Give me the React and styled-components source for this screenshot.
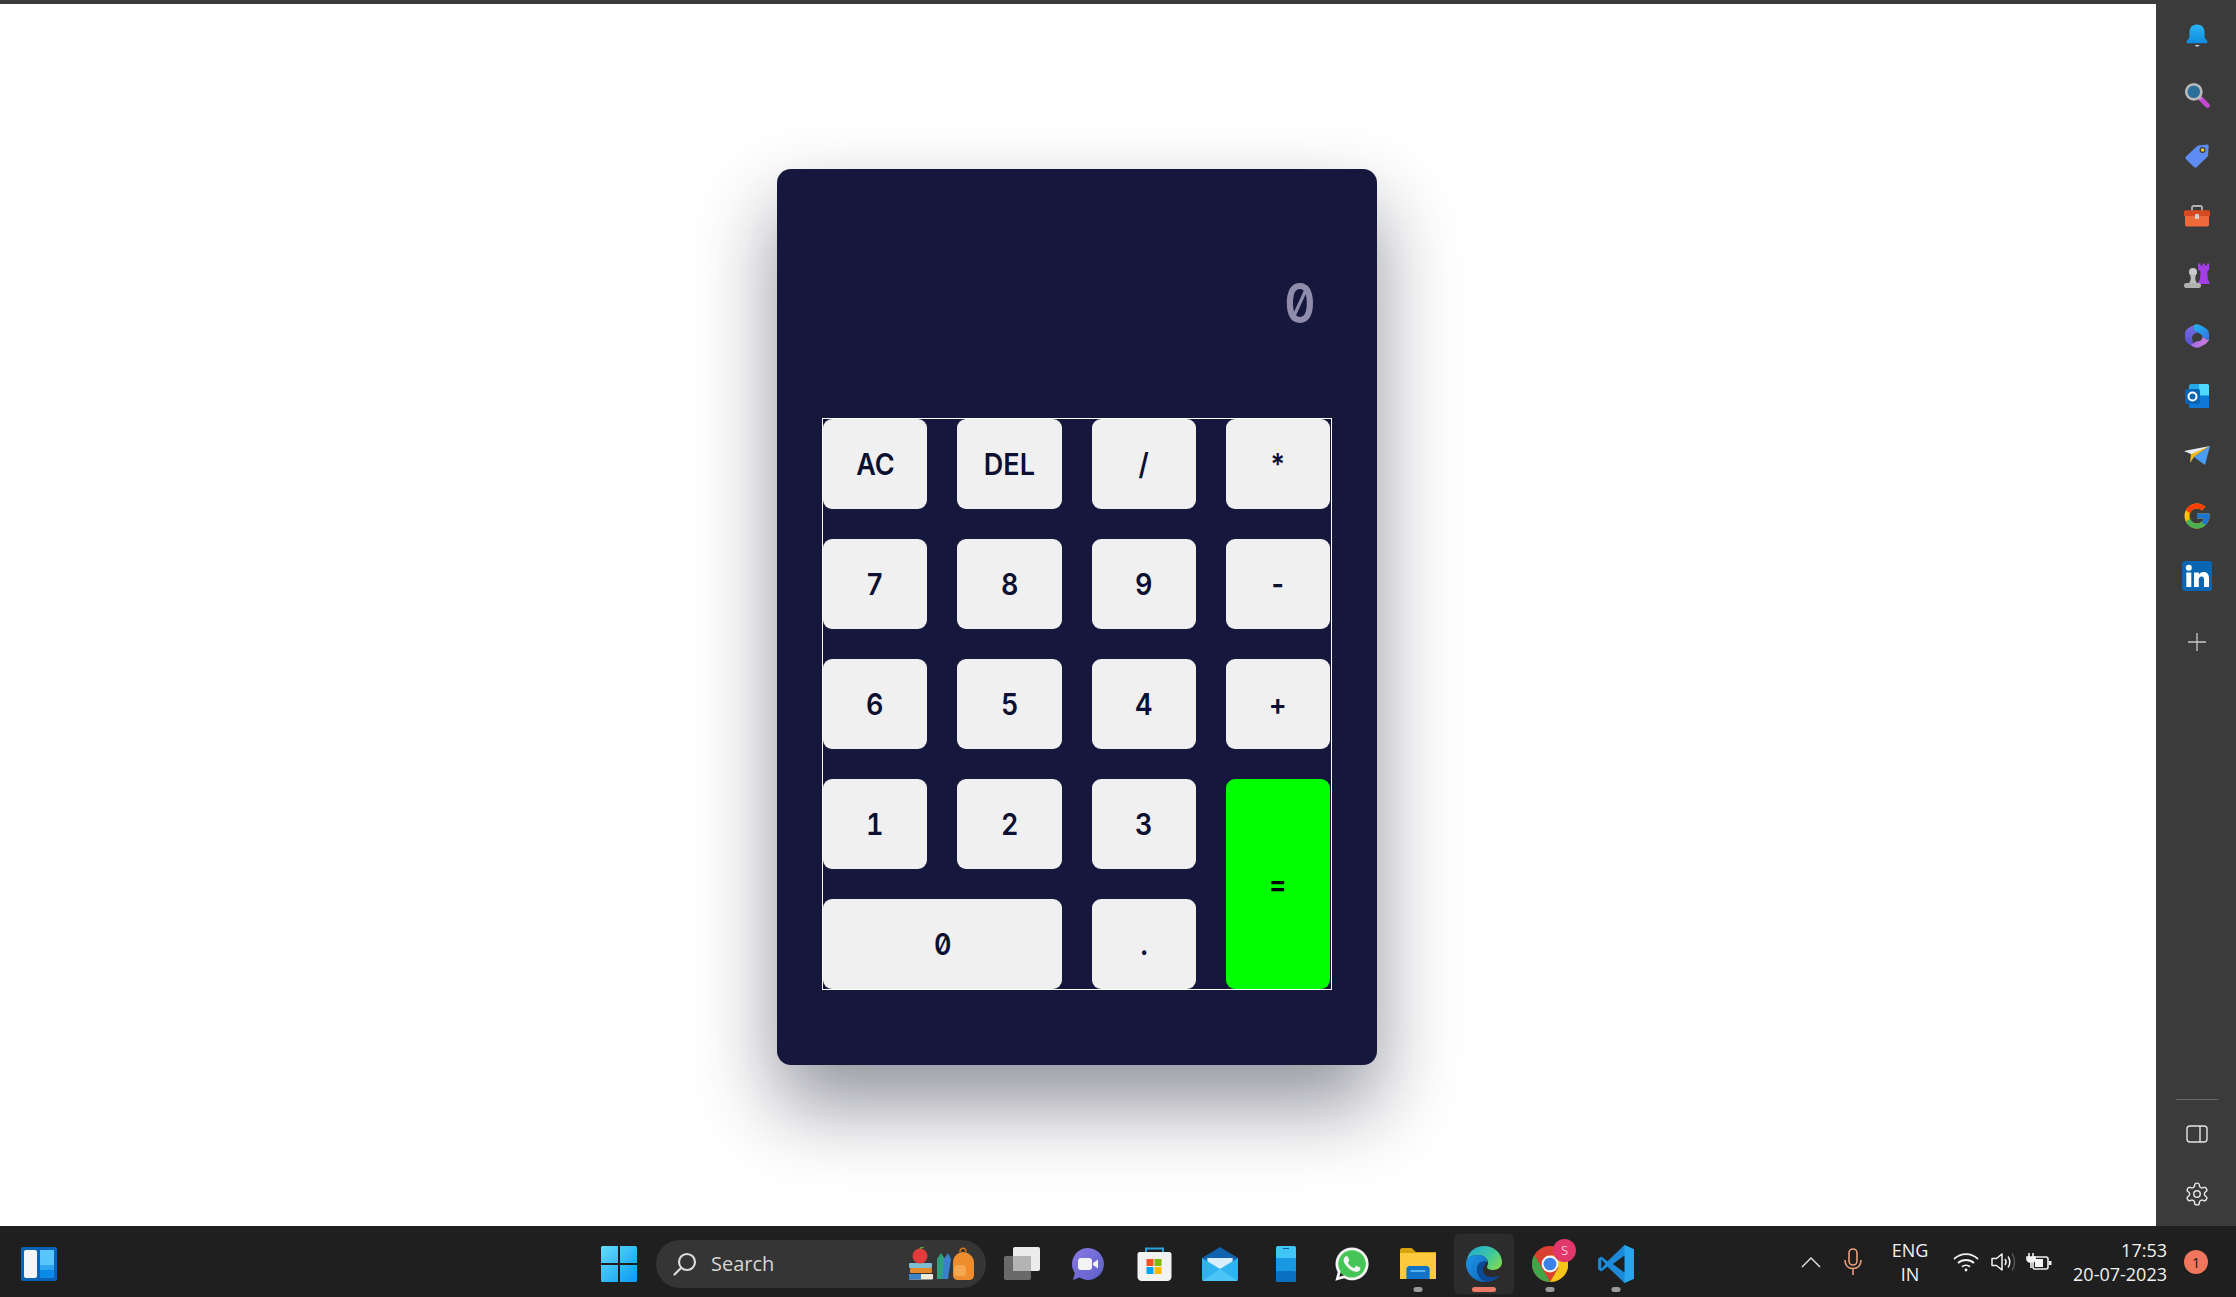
import React from 'react';
import styled, { createGlobalStyle } from 'styled-components';
import { FcGoogle } from 'react-icons/fc';

const Global = createGlobalStyle`
  html, body { margin: 0; padding: 0; width: 100%; height: 100%; overflow: hidden; background: #fff; }
  #root { height: 100%; }
  * { box-sizing: border-box; }
`;

const Screen = styled.div`
  width: 2236px; height: 1297px; display: flex; flex-direction: column; background: #fff;
  font-family: "Open Sans", "Noto Sans", sans-serif;
`;
const TopStrip = styled.div`height: 4px; background: #3b3b3b; flex: none; margin-right: 80px;`;
const Workspace = styled.div`flex: 1; display: flex; min-height: 0;`;
const Content = styled.main`flex: 1; display: flex; align-items: center; justify-content: center; padding: 4px 2px 0 0;`;
const Sidebar = styled.aside`
  width: 80px; margin-top: -4px; background: #3b3b3b; display: flex; flex-direction: column; align-items: center;
  padding: 6px 0 2px 2px; flex: none;
`;
const SideSlot = styled.div`
  height: 60px; display: flex; align-items: center; justify-content: center; flex: none;
  margin-top: ${p => p.$mt || 0}px;
`;
const SideDivider = styled.div`width: 42px; height: 1px; background: #6b6b6b; margin-top: auto; margin-bottom: 4px;`;

const Calculator = styled.section`
  width: 600px; height: 896px; background: #15183c; border-radius: 14px; padding: 0 45px 75px;
  box-shadow: 0 40px 80px rgba(16, 18, 40, 0.46);
  display: flex; flex-direction: column;
`;
const Display = styled.div`
  height: 249px; flex: none; display: flex; align-items: center; justify-content: flex-end; padding: 18px 16px 0 0;
  font-family: Inter, "DejaVu Sans Mono", monospace; font-size: 55px; font-weight: 600; color: #8f8dab;
  font-feature-settings: "zero", "tnum";
`;
const DisplayValue = styled.span`display: inline-block; transform: scaleX(0.88); transform-origin: right center;`;
const Keypad = styled.div`
  border: 1px solid #fff; display: grid; grid-template-columns: repeat(4, 104.3px); grid-auto-rows: 90px;
  column-gap: 30px; row-gap: 30px;
`;
const Key = styled.button`
  border: 0; padding: 0; border-radius: 9px; background: ${p => p.$accent ? '#00ff00' : '#f0f0f1'};
  color: ${p => p.$accent ? '#000' : '#0b0f30'};
  font-family: Inter, "Liberation Sans", sans-serif; font-size: 30px; font-weight: 600;
  font-feature-settings: "zero", "tnum";
  grid-column: ${p => p.$wide ? 'span 2' : 'auto'};
  grid-row: ${p => p.$tall ? 'span 2' : 'auto'};
`;
const KeyLabel = styled.span`display: inline-block; transform: scaleX(0.9);`;

const Taskbar = styled.footer`
  height: 71px; flex: none; background: #1f1f1f; display: flex; align-items: center; color: #fff; position: relative;
`;
const WidgetSlot = styled.div`margin: 4px 0 0 21px; width: 36px; height: 34px; display: flex;`;
const Center = styled.div`margin: 4px 0 0 544px; display: flex; align-items: center;`;
const StartSlot = styled.div`width: 36px; height: 36px; margin-right: 19px; display: flex;`;
const SearchBox = styled.div`
  width: 330px; height: 48px; border-radius: 24px; background: #353535; display: flex; align-items: center;
  padding: 0 8px 0 17px; color: #d6d6d6; font-size: 20px; margin-right: 3px;
`;
const SearchLabel = styled.span`margin-left: 14px; flex: 1;`;
const AppSlot = styled.div`
  width: 60px; height: 60px; margin: 0 3px; display: flex; align-items: center; justify-content: center; position: relative; border-radius: 6px;
  background: ${p => p.$active ? '#2c2c2c' : 'transparent'};
  box-shadow: ${p => p.$active ? 'inset 0 0 0 1px #303030' : 'none'};
`;
const Indicator = styled.span`
  position: absolute; bottom: 1.5px; left: 50%; transform: translateX(-50%); height: 5px; border-radius: 3px;
  width: ${p => p.$active ? 24 : 9}px; background: ${p => p.$active ? '#ec7a68' : '#9a9a9a'};
`;
const ChromeBadge = styled.span`
  position: absolute; top: 5px; right: 4px; width: 23px; height: 23px; border-radius: 50%; background: #e2376b;
  color: #f8c9d8; font-size: 13px; display: flex; align-items: center; justify-content: center;
`;
const Tray = styled.div`margin-left: auto; display: flex; align-items: center; padding-right: 28px; height: 100%;`;
const TrayIcon = styled.div`
  display: flex; align-items: center; justify-content: center; width: ${p => p.$w}px; flex: none;
  margin-right: ${p => p.$mr || 0}px;
`;
const Lang = styled.div`width: 60px; text-align: center; font-size: 18px; line-height: 24px; color: #f2f2f2; margin-right: 13px;`;
const Clock = styled.div`text-align: right; font-size: 18px; line-height: 24px; color: #f2f2f2; width: 100px; margin-left: 14.600px;`;
const Notice = styled.div`
  width: 24px; height: 24px; border-radius: 50%; background: #f0765c; color: #222; font-size: 15px; margin-left: 17px;
  display: flex; align-items: center; justify-content: center;
`;

const keys = [
  ['AC'], ['DEL'], ['/'], ['*'], ['7'], ['8'], ['9'], ['-'], ['6'], ['5'], ['4'], ['+'],
  ['1'], ['2'], ['3'], ['=', { $tall: true, $accent: true }], ['0', { $wide: true }], ['.'],
];

const Bell = () => (
  <svg width="28" height="28" viewBox="0 0 28 28">
    <defs><linearGradient id="bell" x1="0" y1="0" x2="0" y2="1"><stop offset="0" stopColor="#2cb4f5" /><stop offset="1" stopColor="#0f8ce0" /></linearGradient></defs>
    <path d="M12 23h4.500a2.300 2.300 0 0 1-4.500 0Z" fill="#cfcfcf" />
    <path d="M14 2.500c-5 0-7.600 3.600-7.600 8v5L3.600 19.600c-.5.8 0 1.600.9 1.600h19c.9 0 1.400-.8.9-1.600l-2.800-4.100v-5c0-4.400-2.600-8-7.600-8Z" fill="url(#bell)" />
  </svg>
);
const Lens = () => (
  <svg width="28" height="28" viewBox="0 1 28 28">
    <path d="M17 17l7.500 7.500" stroke="#c646d6" strokeWidth="4.600" strokeLinecap="round" />
    <path d="M15 15l3 3" stroke="#a8a8a8" strokeWidth="3" />
    <circle cx="10.800" cy="10.800" r="7.600" fill="#2a6f9b" stroke="#b9b9b9" strokeWidth="2.600" />
  </svg>
);
const Tag = () => (
  <svg width="28" height="28" viewBox="0 0 28 28">
    <path d="M15.500 3.500 24 2.400c1-.1 1.800.7 1.700 1.700L25 13.400c0 .5-.2.900-.6 1.300L13.800 25c-.8.800-2 .8-2.800 0L3 17.200c-.8-.8-.8-2 0-2.800L14.200 4c.4-.3.800-.5 1.300-.5Z" fill="#5d8cf2" />
    <circle cx="19.600" cy="8" r="3" fill="#3b3b3b" /><circle cx="19.600" cy="8" r="1.800" fill="#f1cb2d" />
  </svg>
);
const Toolbox = () => (
  <svg width="28" height="28" viewBox="0 0 28 28">
    <path d="M9 9V5.800C9 4.800 9.800 4 10.800 4h6.400c1 0 1.800.8 1.800 1.800V9" fill="none" stroke="#b3b3b3" strokeWidth="1.800" />
    <path d="M1 10c0-1 .8-1.800 1.800-1.800h22.400c1 0 1.800.8 1.800 1.800v4H1Z" fill="#d64a23" />
    <path d="M2 14h24v8.800c0 1-.8 1.800-1.800 1.800H3.800c-1 0-1.800-.8-1.800-1.800Z" fill="#ee6a3a" />
    <rect x="12" y="12" width="4" height="5" rx="1" fill="#cfcfcf" />
  </svg>
);
const Chess = () => (
  <svg width="28" height="28" viewBox="0 0 28 28">
    <path d="M15 1.500h2.400v2h2.200v-2h2.200v2h2.200v-2h2.200v6l-2 2 .7 8.500 1.600 2v2H15.200v-2l1.700-2 .7-8.500-2.600-2Z" fill="#a63ee8" />
    <circle cx="10" cy="10" r="4" fill="#c9c9c9" />
    <path d="M7 13.500h6l-.8 2c0 2.500.8 4.600 2.200 6H5.600c1.400-1.400 2.200-3.500 2.200-6Z" fill="#bdbdbd" />
    <rect x="1" y="21" width="17" height="5" rx="2.200" fill="#b1b1b1" />
  </svg>
);
const Copilot = () => (
  <svg width="28" height="28" viewBox="0 0 28 28">
    <defs>
      <linearGradient id="copA" x1="0" y1="0" x2="1" y2="1"><stop offset="0" stopColor="#22b8ee" /><stop offset="1" stopColor="#2f6fe4" /></linearGradient>
      <linearGradient id="copB" x1="0" y1="0" x2="0" y2="1"><stop offset="0" stopColor="#7f6fe8" /><stop offset="1" stopColor="#4f4fd0" /></linearGradient>
      <linearGradient id="copC" x1="0" y1="0" x2="1" y2="0"><stop offset="0" stopColor="#a46be6" /><stop offset="1" stopColor="#d07ad8" /></linearGradient>
    </defs>
    <path d="M10.500 3.200c2.200-1.300 4.800-1.300 7 0l5 2.900c2.200 1.300 3.500 3.600 3.500 6.100v6.600L19.500 15c-.4-2-2-3.600-4-4L10.500 8Z" fill="url(#copA)" />
    <path d="M5.500 6.100l5-2.900v5l5 3c-2.500-.7-6.500 1-6.500 4.800 0 1 .3 2 .8 2.800L10 24.600l-4.500-2.700C3.300 20.600 2 18.300 2 15.800v-3.600c0-2.500 1.300-4.800 3.500-6.100Z" fill="url(#copB)" />
    <path d="M19.500 15l6.500 3.800v-3c0 2.500-1.300 4.800-3.500 6.100l-5 2.900c-2.200 1.300-4.800 1.300-7 0l-3-1.800 6.300-3.800c2.800.8 5.700-1.300 5.700-4.200Z" fill="url(#copC)" />
  </svg>
);
const Outlook = () => (
  <svg width="28" height="28" viewBox="0 0 28 28">
    <rect x="6" y="2" width="20" height="24" rx="2" fill="#28a8ea" />
    <path d="M16 2h8c1 0 2 1 2 2v9H16Z" fill="#50d9ff" />
    <path d="M6 14h20v10c0 1-1 2-2 2H8c-1 0-2-1-2-2Z" fill="#0f78d4" />
    <rect x="2" y="7" width="15" height="15" rx="2" fill="#0a64b4" />
    <circle cx="9.500" cy="14.500" r="4" fill="none" stroke="#fff" strokeWidth="2" />
  </svg>
);
const Send = () => (
  <svg width="28" height="28" viewBox="0 0 28 28">
    <path d="M1 9 27 4 10 13Z" fill="#e8eef5" />
    <path d="M27 4 8 12l-1 9 4-6Z" fill="#f3b81f" />
    <path d="M27 4 11 15l11 8Z" fill="#4b9cf5" />
  </svg>
);
const LinkedIn = () => (
  <svg width="30" height="30" viewBox="0 0 30 30">
    <rect width="30" height="30" rx="2.500" fill="#0a66b0" />
    <circle cx="6.800" cy="6.800" r="3" fill="#fff" />
    <rect x="4.300" y="11.500" width="5" height="14.500" fill="#fff" />
    <path d="M12 11.500h4.800v2.100c1-1.600 2.700-2.500 4.700-2.500 4 0 5.500 2.500 5.500 6.600V26h-5v-7.300c0-2-.6-3.300-2.400-3.300-1.900 0-2.800 1.300-2.800 3.300V26H12Z" fill="#fff" />
  </svg>
);
const Plus = () => (
  <svg width="20" height="20" viewBox="0 0 20 20"><path d="M10 1v18M1 10h18" stroke="#c9c9c9" strokeWidth="1.300" /></svg>
);
const PanelIcon = () => (
  <svg width="22" height="20" viewBox="0 0 22 20"><rect x="1" y="2" width="20" height="16" rx="3" fill="none" stroke="#e5e5e5" strokeWidth="1.400" /><path d="M14 2v16" stroke="#e5e5e5" strokeWidth="1.400" /></svg>
);
const Gear = () => (
  <svg width="26" height="26" viewBox="0 0 24 24" fill="none" stroke="#e5e5e5" strokeWidth="1.300" strokeLinejoin="round">
    <path d="M12.220 2h-.44a2 2 0 0 0-2 2v.18a2 2 0 0 1-1 1.730l-.43.250a2 2 0 0 1-2 0l-.15-.080a2 2 0 0 0-2.730.730l-.22.380a2 2 0 0 0 .730 2.730l.15.100a2 2 0 0 1 1 1.720v.510a2 2 0 0 1-1 1.740l-.15.090a2 2 0 0 0-.730 2.730l.22.380a2 2 0 0 0 2.730.730l.15-.080a2 2 0 0 1 2 0l.43.250a2 2 0 0 1 1 1.730V20a2 2 0 0 0 2 2h.44a2 2 0 0 0 2-2v-.18a2 2 0 0 1 1-1.730l.43-.250a2 2 0 0 1 2 0l.15.080a2 2 0 0 0 2.730-.730l.22-.390a2 2 0 0 0-.730-2.730l-.15-.080a2 2 0 0 1-1-1.740v-.500a2 2 0 0 1 1-1.740l.15-.090a2 2 0 0 0 .730-2.730l-.22-.380a2 2 0 0 0-2.730-.730l-.15.080a2 2 0 0 1-2 0l-.43-.250a2 2 0 0 1-1-1.730V4a2 2 0 0 0-2-2Z" />
    <circle cx="12" cy="12" r="3" />
  </svg>
);

const Widgets = () => (
  <svg width="36" height="34" viewBox="0 0 36 34">
    <rect width="36" height="34" rx="2" fill="#0c63b4" />
    <rect x="3" y="3" width="13" height="28" rx="2" fill="#f3f5f8" />
    <rect x="19" y="3" width="14" height="15" fill="#58c6fb" />
    <rect x="19" y="18" width="14" height="5" fill="#2ea5ee" />
    <rect x="19" y="23" width="14" height="8" fill="#0c8ae8" />
  </svg>
);
const Start = () => (
  <svg width="36" height="36" viewBox="0 0 36 36">
    <defs><linearGradient id="win" x1="0" y1="0" x2="1" y2="1"><stop offset="0" stopColor="#62dcfb" /><stop offset="1" stopColor="#0a9af2" /></linearGradient></defs>
    <path d="M1.500 0H17v17H0V1.500A1.500 1.500 0 0 1 1.500 0ZM19 0h15.500A1.500 1.500 0 0 1 36 1.500V17H19ZM0 19h17v17H1.500A1.500 1.500 0 0 1 0 34.500ZM19 19h17v15.500a1.500 1.500 0 0 1-1.500 1.500H19Z" fill="url(#win)" />
  </svg>
);
const Magnifier = () => (
  <svg width="24" height="24" viewBox="0 0 24 24" fill="none" stroke="#dcdcdc" strokeWidth="2.200">
    <circle cx="14" cy="10" r="8" /><path d="M8 16l-6.500 6.500" strokeLinecap="round" />
  </svg>
);
const Backpack = () => (
  <svg width="70" height="34" viewBox="0 0 70 34">
    <rect x="1" y="16" width="23" height="5" rx="1" fill="#7dbfd0" />
    <rect x="2" y="21" width="22" height="5" rx="1" fill="#e58a2e" />
    <rect x="1" y="27" width="24" height="5.500" rx="1" fill="#f0ead8" />
    <rect x="1" y="27" width="12" height="5.500" fill="#3d83c9" />
    <circle cx="12" cy="9" r="7.500" fill="#e23b3b" />
    <path d="M12 2q1-2 4-2" stroke="#5aa53c" strokeWidth="1.600" fill="none" />
    <path d="M29 12l4-6 4 6v20h-8Z" fill="#2fa07a" />
    <path d="M36 12l4-6 3 6-3 20h-6Z" fill="#3b80cc" />
    <path d="M45 16c0-7 5-11 10-11s11 4 11 11v12c0 3-2 5-5 5H50c-3 0-5-2-5-5Z" fill="#ee8d2d" />
    <rect x="46" y="18" width="12" height="11" rx="3" fill="#f6a64c" />
    <path d="M52 5c0-5 6-5 6 0" stroke="#d07820" strokeWidth="1.500" fill="none" />
  </svg>
);
const TaskView = () => (
  <svg width="36" height="34" viewBox="0 0 36 34">
    <rect x="0" y="9" width="27" height="24" rx="2" fill="#6a6a6a" />
    <rect x="9" y="0" width="27" height="24" rx="2" fill="#ececec" />
    <rect x="9" y="9" width="18" height="15" fill="#b4b4b4" />
  </svg>
);
const ChatApp = () => (
  <svg width="36" height="36" viewBox="0 0 36 36">
    <defs><linearGradient id="chat" x1="0" y1="0" x2="1" y2="1"><stop offset="0" stopColor="#8a79e6" /><stop offset="1" stopColor="#5b5fc7" /></linearGradient></defs>
    <path d="M18 2a16 16 0 1 1-8.500 29.600L3 34l1.800-7A16 16 0 0 1 18 2Z" fill="url(#chat)" />
    <rect x="8" y="12" width="14" height="12" rx="3" fill="#f3f3f3" />
    <path d="M23 17l5-3.500v9L23 19Z" fill="#f3f3f3" />
  </svg>
);
const Store = () => (
  <svg width="35" height="36" viewBox="0 0 34 36">
    <path d="M8.500 7V2.500h17V7" fill="none" stroke="#2aa4e0" strokeWidth="2" />
    <path d="M2 6h30c1 0 2 1 2 2v23c0 2-2 4-4 4H4c-2 0-4-2-4-4V8c0-1 1-2 2-2Z" fill="#f2f2f2" />
    <rect x="9" y="13" width="7" height="7" fill="#f25022" /><rect x="17" y="13" width="7" height="7" fill="#7fba00" />
    <rect x="9" y="21" width="7" height="7" fill="#00a4ef" /><rect x="17" y="21" width="7" height="7" fill="#ffb900" />
  </svg>
);
const Mail = () => (
  <svg width="36" height="34" viewBox="0 0 34 34" preserveAspectRatio="none">
    <path d="M0 11 17 0l17 11v3H0Z" fill="#0f62ad" />
    <path d="M5 11h24v13H5Z" fill="#d9eefa" />
    <path d="M0 11l17 11 17-11v21c0 1-1 2-2 2H2c-1 0-2-1-2-2Z" fill="#2eb3f0" />
    <path d="M0 34l17-12 17 12Z" fill="#4dc4f6" />
  </svg>
);
const Phone = () => (
  <svg width="20" height="36" viewBox="0 0 20 36">
    <rect width="20" height="36" rx="2" fill="#1898e0" />
    <path d="M0 2C0 1 1 0 2 0h16c1 0 2 1 2 2v10H0Z" fill="#3fc6f7" />
    <rect y="25" width="20" height="11" rx="2" fill="#0b6fbf" />
    <rect x="7" y="2" width="6" height="1" fill="#125a9c" />
  </svg>
);
const WhatsApp = () => (
  <svg width="36" height="38" viewBox="0 0 448 512">
    <circle cx="224" cy="254" r="195" fill="#45c555" />
    <path fill="#f5f5f5" d="M380.900 97.100C339 55.100 283.200 32 223.900 32c-122.400 0-222 99.600-222 222 0 39.100 10.200 77.300 29.600 111L0 480l117.700-30.900c32.400 17.700 68.900 27 106.100 27h.1c122.300 0 224.100-99.600 224.100-222 0-59.300-25.200-115-67.100-157zm-157 341.600c-33.200 0-65.700-8.900-94-25.700l-6.700-4-69.800 18.300L72 359.200l-4.400-7c-18.500-29.400-28.200-63.300-28.200-98.200 0-101.700 82.800-184.500 184.600-184.500 49.300 0 95.600 19.200 130.400 54.100 34.800 34.900 56.200 81.200 56.100 130.500 0 101.800-84.900 184.600-186.600 184.600zm101.200-138.200c-5.500-2.800-32.800-16.200-37.900-18-5.100-1.900-8.800-2.800-12.500 2.800-3.700 5.600-14.300 18-17.600 21.800-3.200 3.700-6.500 4.200-12 1.400-32.600-16.300-54-29.100-75.500-66-5.700-9.800 5.700-9.100 16.300-30.300 1.800-3.700.9-6.900-.5-9.700-1.400-2.800-12.500-30.100-17.100-41.200-4.500-10.800-9.100-9.300-12.500-9.500-3.200-.2-6.900-.2-10.600-.2-3.700 0-9.700 1.400-14.800 6.900-5.100 5.600-19.400 19-19.400 46.300 0 27.300 19.900 53.700 22.600 57.400 2.800 3.700 39.100 59.700 94.800 83.800 35.200 15.200 49 16.500 66.600 13.900 10.700-1.600 32.800-13.400 37.400-26.400 4.600-13 4.600-24.100 3.200-26.400-1.300-2.500-5-3.900-10.500-6.600z" />
  </svg>
);
const Folder = () => (
  <svg width="36" height="34" viewBox="0 0 34 34" preserveAspectRatio="none">
    <path d="M0 3c0-1 1-2 2-2h9l4 4h19v6H0Z" fill="#d9a30f" />
    <path d="M0 6h34v26H0Z" fill="#fdc93f" />
    <path d="M6 32v-10c0-1 1-3 3-3h16c2 0 3 2 3 3v10Z" fill="#1272c8" />
    <rect x="10" y="23" width="14" height="2" fill="#53b2ef" />
  </svg>
);
const Edge = () => (
  <svg width="36" height="36" viewBox="0 0 36 36">
    <defs>
      <linearGradient id="edgeA" x1="0" y1="0" x2="1" y2=".7"><stop offset="0" stopColor="#20a4dc" /><stop offset=".6" stopColor="#3cc8a0" /><stop offset="1" stopColor="#7ad85a" /></linearGradient>
      <linearGradient id="edgeB" x1="0" y1="0" x2="1" y2="1"><stop offset="0" stopColor="#1e96e6" /><stop offset="1" stopColor="#0d66bc" /></linearGradient>
    </defs>
    <path d="M1 13C3 5 10 0 18 0c10 0 18 7 18 16 0 5-4 8-9 8-3 0-6-1-6-3 0-1 1-2 1-4 0-5-5-8-10-8-5 0-9 2-11 4Z" fill="url(#edgeA)" />
    <path d="M1 13c2-2 6-4 11-4 6 0 9 3 9 7-5-2-10 2-10 7 0 5 3 10 8 13C8 36 0 27 0 18c0-2 .4-3.500 1-5Z" fill="url(#edgeB)" />
    <path d="M21 16c-5-2-10 2-10 7 0 5 3 10 8 13 6 0 11-2 15-7-3 2-6 2-9 2-5 0-8-3-8-7 0-3 2-6 4-8Z" fill="#0b4a96" />
  </svg>
);
const Chrome = () => (
  <svg width="36" height="36" viewBox="0 0 34 34">
    <circle cx="17" cy="17" r="17" fill="#d8402f" />
    <path d="M2.300 8.500 10 22l7 12C7.600 34 0 26.400 0 17c0-3 .8-6 2.300-8.500Z" fill="#3fa548" />
    <path d="M17 9h15.300A17 17 0 0 1 17 34l8-13.500Z" fill="#f5c518" />
    <circle cx="17" cy="17" r="8" fill="#f3f3f3" />
    <circle cx="17" cy="17" r="6" fill="#3b82e8" />
  </svg>
);
const VSCode = () => (
  <svg width="36" height="38" viewBox="0 0 34 36">
    <path d="M25 0 9 15.500l-6-4.500-3 2v10l3 2 6-4.500L25 36l9-4V4Z" fill="#1c8ad8" />
    <path d="M25 0l9 4v28l-9 4Z" fill="#2aa6ee" />
    <path d="M25 10 14 18l11 8Z" fill="#1f1f1f" />
    <path d="M3 13.500 7 18l-4 4.500Z" fill="#1f1f1f" />
  </svg>
);
const Chevron = () => (
  <svg width="20" height="12" viewBox="0 0 20 12"><path d="M1 11 10 2l9 9" fill="none" stroke="#e8e8e8" strokeWidth="1.400" /></svg>
);
const Mic = () => (
  <svg width="20" height="28" viewBox="0 0 20 28" fill="none" stroke="#e9a07e" strokeWidth="1.600">
    <rect x="6" y="1" width="8" height="16" rx="4" /><path d="M2 12c0 5 3 8.500 8 8.500s8-3.500 8-8.500M10 20.500V27" />
  </svg>
);
const Wifi = () => (
  <svg width="26" height="20" viewBox="0 0 26 20" fill="none" stroke="#f2f2f2" strokeWidth="1.800">
    <path d="M1 7c7-6.500 17-6.500 24 0M5 11c4.500-4 11.500-4 16 0M9 14.800c2.300-2 5.700-2 8 0" /><circle cx="13" cy="18" r="1.400" fill="#f2f2f2" stroke="none" />
  </svg>
);
const Speaker = () => (
  <svg width="26" height="24" viewBox="0 0 26 24" fill="none" stroke="#f2f2f2" strokeWidth="1.500">
    <path d="M1 8.500h4.500L11 4v16l-5.500-4.500H1Z" strokeLinejoin="round" />
    <path d="M14 9c1.300 1.800 1.300 4.200 0 6M17 6.500c2.400 3 2.400 8 0 11" />
    <path d="M21 3.500c3.400 5 3.400 12 0 17" stroke="#555" />
  </svg>
);
const Battery = () => (
  <svg width="26" height="20" viewBox="0 0 26 20" fill="none" stroke="#f2f2f2" strokeWidth="1.600">
    <rect x="7" y="5" width="15" height="12" rx="2" />
    <rect x="9" y="7" width="8" height="8" fill="#f2f2f2" stroke="none" />
    <rect x="23" y="9" width="2.500" height="4" fill="#f2f2f2" stroke="none" />
    <path d="M3 1v4M7 1v4M1 5h8v2c0 2-2 3-4 3s-4-1-4-3ZM5 10v6" fill="#f2f2f2" />
  </svg>
);

const apps = [
  { icon: <TaskView /> },
  { icon: <ChatApp /> },
  { icon: <Store /> },
  { icon: <Mail /> },
  { icon: <Phone /> },
  { icon: <WhatsApp /> },
  { icon: <Folder />, dot: true },
  { icon: <Edge />, dot: true, active: true },
  { icon: <Chrome />, dot: true, badge: 'S' },
  { icon: <VSCode />, dot: true },
];

export default function App() {
  return (
    <Screen>
      <Global />
      <TopStrip />
      <Workspace>
        <Content>
          <Calculator>
            <Display><DisplayValue>0</DisplayValue></Display>
            <Keypad>
              {keys.map(([label, props]) => <Key key={label} {...props}><KeyLabel>{label}</KeyLabel></Key>)}
            </Keypad>
          </Calculator>
        </Content>
        <Sidebar>
          {[<Bell />, <Lens />, <Tag />, <Toolbox />, <Chess />, <Copilot />, <Outlook />, <Send />].map((icon, i) => (
            <SideSlot key={i}>{icon}</SideSlot>
          ))}
          <SideSlot><FcGoogle size={30} /></SideSlot>
          <SideSlot><LinkedIn /></SideSlot>
          <SideSlot $mt={6}><Plus /></SideSlot>
          <SideDivider />
          <SideSlot><PanelIcon /></SideSlot>
          <SideSlot><Gear /></SideSlot>
        </Sidebar>
      </Workspace>
      <Taskbar>
        <WidgetSlot><Widgets /></WidgetSlot>
        <Center>
          <StartSlot><Start /></StartSlot>
          <SearchBox>
            <Magnifier />
            <SearchLabel>Search</SearchLabel>
            <Backpack />
          </SearchBox>
          {apps.map((a, i) => (
            <AppSlot key={i} $active={a.active}>
              {a.icon}
              {a.dot && <Indicator $active={a.active} />}
              {a.badge && <ChromeBadge>{a.badge}</ChromeBadge>}
            </AppSlot>
          ))}
        </Center>
        <Tray>
          <TrayIcon $w={20} $mr={22}><Chevron /></TrayIcon>
          <TrayIcon $w={20} $mr={17}><Mic /></TrayIcon>
          <Lang>ENG<br />IN</Lang>
          <TrayIcon $w={26} $mr={12}><Wifi /></TrayIcon>
          <TrayIcon $w={26} $mr={9.4}><Speaker /></TrayIcon>
          <TrayIcon $w={26}><Battery /></TrayIcon>
          <Clock>17:53<br />20-07-2023</Clock>
          <Notice>1</Notice>
        </Tray>
      </Taskbar>
    </Screen>
  );
}
